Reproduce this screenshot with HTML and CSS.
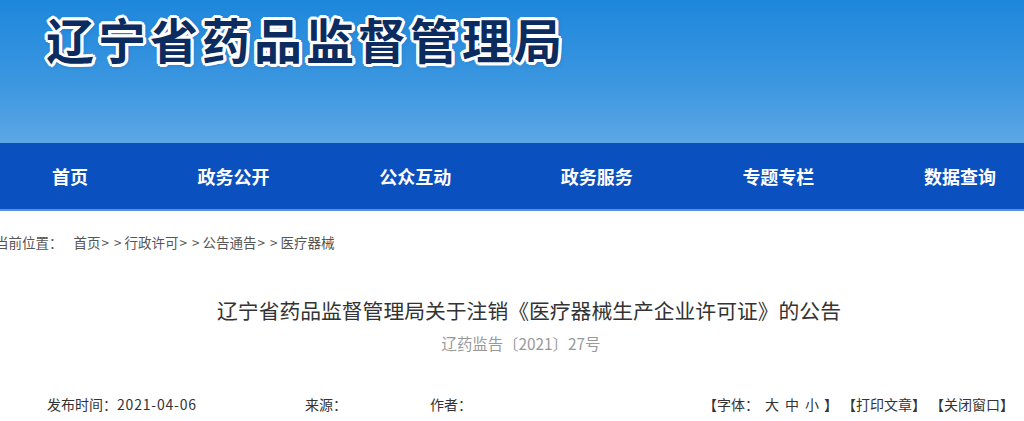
FILE: index.html
```html
<!DOCTYPE html>
<html lang="zh-CN">
<head>
    <meta charset="UTF-8">
    <meta name="viewport" content="width=device-width, initial-scale=1.0">
    <title>辽宁省药品监督管理局</title>
    <link rel="stylesheet" href="styles.css">
</head>
<body>
    <header class="banner">
        <h1 class="site-name">辽宁省药品监督管理局</h1>
    </header>
    <nav class="nav">
        <a href="#">首页</a>
        <a href="#">政务公开</a>
        <a href="#">公众互动</a>
        <a href="#">政务服务</a>
        <a href="#">专题专栏</a>
        <a href="#">数据查询</a>
    </nav>
    <main class="article">
        <div class="crumb">
            <span class="crumb-label">当前位置：</span>
            <a href="#">首页</a><span class="sep"><i>&gt;</i><i>&gt;</i></span><a href="#">行政许可</a><span class="sep"><i>&gt;</i><i>&gt;</i></span><a href="#">公告通告</a><span class="sep"><i>&gt;</i><i>&gt;</i></span><a href="#">医疗器械</a>
        </div>
        <h2 class="title">辽宁省药品监督管理局关于注销《医疗器械生产企业许可证》的公告</h2>
        <p class="doc-no">辽药监告〔2021〕27号</p>
        <div class="meta">
            <span class="meta-date">发布时间：<span class="num">2021-04-06</span></span>
            <span class="meta-source">来源：</span>
            <span class="meta-author">作者：</span>
            <div class="tools">
                <span class="font-size">【字体：<a href="#">大</a><a href="#">中</a><a href="#">小</a>】</span>
                <a href="#">【打印文章】</a>
                <a href="#">【关闭窗口】</a>
            </div>
        </div>
    </main>
</body>
</html>
```

FILE: styles.css
```css
body {
    margin: 0;
    font-family: "Noto Sans CJK SC", "Noto Sans", sans-serif;
    background: #fff;
    color: #333;
    overflow: hidden;
}
a {
    color: inherit;
    text-decoration: none;
}
.banner {
    height: 143px;
    box-sizing: border-box;
    padding: 13px 0 0 46px;
    background: linear-gradient(180deg, #1d87dc 0%, #3d97e0 60%, #5ca7e5 100%);
}
.site-name {
    margin: 0;
    font-size: 48px;
    line-height: 50px;
    font-weight: 700;
    letter-spacing: 4px;
    color: #0c2b5f;
    text-shadow:
        2px 0 0 #fff, -2px 0 0 #fff, 0 2px 0 #fff, 0 -2px 0 #fff,
        2px 2px 0 #fff, -2px -2px 0 #fff, 2px -2px 0 #fff, -2px 2px 0 #fff,
        3px 0 0 #fff, -3px 0 0 #fff, 0 3px 0 #fff, 0 -3px 0 #fff,
        3px 1px 0 #fff, -3px -1px 0 #fff, 1px 3px 0 #fff, -1px -3px 0 #fff,
        1px 1px 5px rgba(0, 40, 100, 0.5);
}
.nav {
    display: flex;
    gap: 109.6px;
    height: 66px;
    padding-left: 52px;
    background-color: #0a50be;
    border-bottom: 2px solid #5a90dc;
}
.nav a {
    color: #fff;
    font-size: 18px;
    font-weight: 700;
    line-height: 66px;
}
.crumb {
    margin-left: -5px;
    padding-top: 21px;
    font-size: 13.5px;
    line-height: 20px;
    color: #555;
}
.crumb-label {
    margin-right: 8px;
}
.sep {
    display: inline-flex;
    justify-content: space-between;
    width: 20px;
    padding: 0 3px 0 1px;
}
.sep i {
    font-style: normal;
}
.title {
    margin: 43px 0 0;
    padding-left: 34px;
    text-align: center;
    font-size: 20.8px;
    font-weight: 400;
    line-height: 30px;
    color: #333;
}
.doc-no {
    margin: 6px 0 0;
    padding-left: 18px;
    text-align: center;
    font-size: 15.4px;
    line-height: 24px;
    color: #999;
}
.meta {
    display: flex;
    margin-top: 37px;
    padding: 0 10px 0 47px;
    font-size: 14px;
    line-height: 24px;
    color: #333;
}
.num {
    letter-spacing: 0.8px;
}
.meta-date {
    width: 258px;
}
.meta-source {
    width: 125px;
}
.tools {
    margin-left: auto;
    display: flex;
    gap: 4px;
}
.font-size a {
    margin-left: 6px;
}
.font-size a:first-child {
    margin-left: 6px;
}
.font-size a:last-of-type {
    margin-right: 5px;
}
```
